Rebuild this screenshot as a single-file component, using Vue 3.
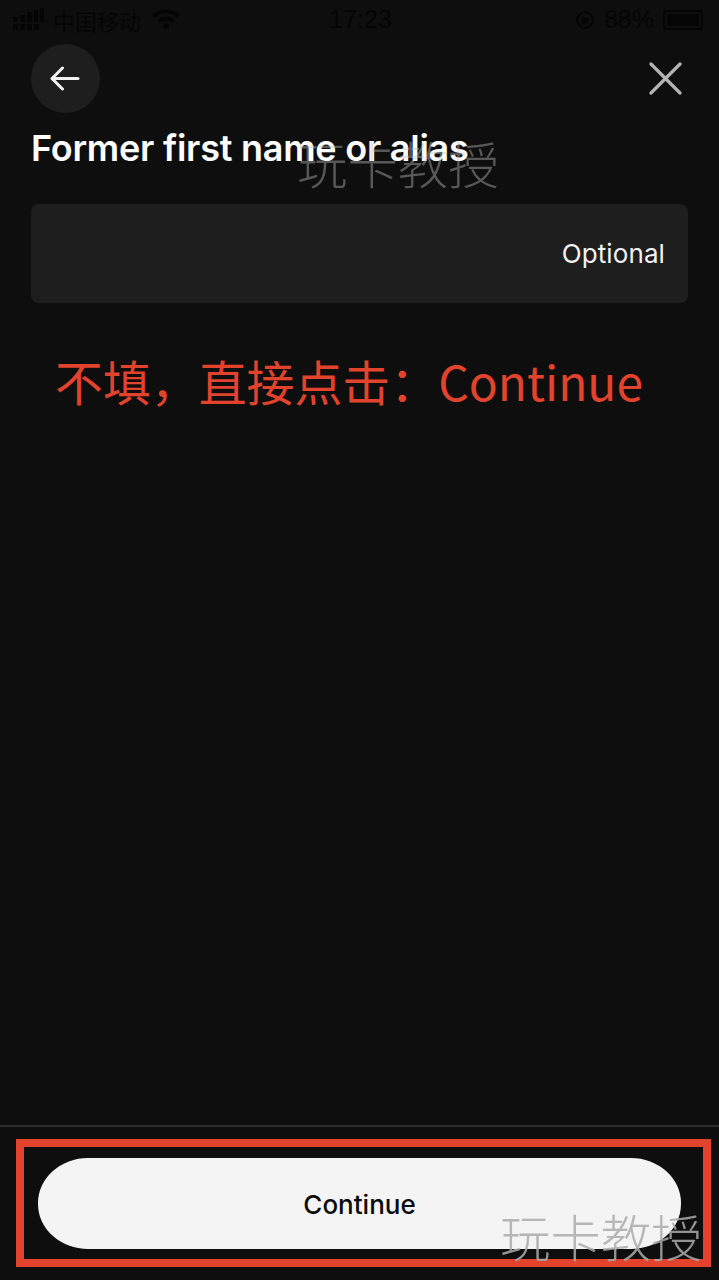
<script setup>
const wm = '玩卡教授'
</script>

<template>
  <div class="page">
    <div class="status">
      <div class="status-left">
        <svg width="31" height="23" viewBox="0 0 31 23">
          <g fill="#050505">
            <rect x="0" y="16" width="5" height="6" rx="1"/>
            <rect x="7" y="16" width="5" height="6" rx="1"/>
            <rect x="14" y="16" width="5" height="6" rx="1"/>
            <rect x="21" y="16" width="5" height="6" rx="1"/>
            <rect x="0" y="9" width="5" height="5" rx="1"/>
            <rect x="7" y="7" width="5" height="7" rx="1"/>
            <rect x="14" y="4" width="5" height="10" rx="1"/>
            <rect x="21" y="2" width="4" height="12" rx="1"/>
            <rect x="27" y="0" width="4" height="14" rx="1"/>
          </g>
        </svg>
        <span class="carrier">中国移动</span>
        <svg class="wifi" width="28" height="21" viewBox="0 0 28 21" fill="none" stroke="#050505" stroke-width="3.4">
          <path d="M1.5 7.5 C8.5 0.5 19.5 0.5 26.5 7.5"/>
          <path d="M6.5 12.5 C10.5 8.5 17.5 8.5 21.5 12.5"/>
          <circle cx="14" cy="17" r="3" fill="#050505" stroke="none"/>
        </svg>
      </div>
      <span class="time">17:23</span>
      <div class="status-right">
        <svg width="20" height="20" viewBox="0 0 20 20" fill="none" stroke="#050505" stroke-width="2">
          <circle cx="10" cy="10" r="8"/>
          <rect x="6.5" y="7.5" width="7" height="6" fill="#050505" stroke="none"/>
        </svg>
        <span class="pct">88%</span>
        <span class="battery"><span class="battery-fill"></span></span>
      </div>
    </div>

    <div class="nav">
      <button class="back" type="button" aria-label="Back">
        <svg width="30" height="25" viewBox="0 0 30 25" fill="none" stroke="#f2f2f2" stroke-width="3" stroke-linecap="round" stroke-linejoin="round">
          <path d="M28 12.5 H2.5"/>
          <path d="M12.5 2 L2 12.5 L12.5 23"/>
        </svg>
      </button>
      <button class="close" type="button" aria-label="Close">
        <svg width="33" height="33" viewBox="0 0 33 33" fill="none" stroke="#b4b4b4" stroke-width="3.2" stroke-linecap="round">
          <path d="M2 2 L31 31"/>
          <path d="M31 2 L2 31"/>
        </svg>
      </button>
    </div>

    <h1 class="title">Former first name or alias</h1>

    <div class="field"><span class="optional">Optional</span></div>

    <p class="note">不填，直接点击：Continue</p>

    <div class="spacer"></div>

    <div class="footer">
      <div class="highlight">
        <button class="continue" type="button">Continue</button>
      </div>
    </div>

    <span class="wm wm-top">{{ wm }}</span>
    <span class="wm wm-bottom">{{ wm }}</span>
  </div>
</template>

<style scoped>
.page {
  position: relative;
  width: 719px;
  height: 1280px;
  overflow: hidden;
  background: #0e0e0e;
  display: flex;
  flex-direction: column;
  font-family: Inter, "Noto Sans CJK SC", sans-serif;
}
.status {
  height: 39px;
  padding: 0 11px 0 13px;
  display: grid;
  grid-template-columns: 1fr auto 1fr;
  align-items: center;
  color: #050505;
  font-size: 22px;
  font-family: "Liberation Sans", "Noto Sans CJK SC", sans-serif;
}
.status-left { display: flex; align-items: center; gap: 9px; }
.wifi { margin-left: 2px; }
.time { font-size: 25px; }
.status-right { display: flex; align-items: center; justify-content: flex-end; gap: 9px; }
.pct { font-size: 25px; }
.battery {
  width: 40px;
  height: 20px;
  border: 2px solid #050505;
  border-radius: 4px;
  padding: 2px;
  box-sizing: border-box;
  margin: 0 5px 0 0;
  display: flex;
}
.battery-fill { flex: 1; background: #050505; border-radius: 1px; }
.nav {
  padding: 4px 37px 0 31px;
  height: 70px;
  display: flex;
  justify-content: space-between;
  align-items: center;
}
.back {
  width: 69px;
  height: 69px;
  border: 0;
  padding: 0 2px 0 0;
  border-radius: 50%;
  background: #1e1e1e;
  display: flex;
  align-items: center;
  justify-content: center;
}
.close {
  border: 0;
  padding: 0;
  background: none;
  display: flex;
}
.title {
  margin: 14px 0 0 31px;
  color: #fff;
  font-size: 36px;
  line-height: 42px;
  font-weight: 600;
  letter-spacing: -0.24px;
}
.field {
  margin: 35px 31px 0;
  height: 99px;
  border-radius: 8px;
  background: #1e1e1e;
  padding-right: 23px;
  display: flex;
  align-items: center;
  justify-content: flex-end;
}
.optional { color: #f2f2f2; font-size: 26px; letter-spacing: 0.1px; }
.note {
  margin: 47px 0 0 55px;
  color: #e2432d;
  font-size: 47.9px;
  line-height: 60px;
  font-family: "Noto Sans CJK SC", sans-serif;
}
.spacer { flex: 1; }
.footer {
  border-top: 2px solid #2c2c2c;
  height: 155px;
  box-sizing: border-box;
  padding: 12px 8px 13px 16px;
}
.highlight {
  height: 128px;
  box-sizing: border-box;
  border: 8px solid #e2432d;
  padding: 11px 22px 9px 14px;
}
.continue {
  width: 100%;
  height: 91px;
  border: 0;
  padding: 2px 0 0;
  border-radius: 50px / 45px;
  background: #f4f4f4;
  color: #0a0a0a;
  font-family: Inter, sans-serif;
  font-size: 26px;
  font-weight: 500;
}
.wm {
  position: absolute;
  color: rgba(190, 190, 190, 0.42);
  font-size: 50.4px;
  line-height: 60px;
  font-family: "Noto Sans CJK SC", sans-serif;
  font-weight: 300;
  white-space: nowrap;
}
.wm-top { left: 297px; top: 133px; }
.wm-bottom { left: 500px; top: 1206px; color: rgba(170, 170, 170, 0.85); }
</style>
